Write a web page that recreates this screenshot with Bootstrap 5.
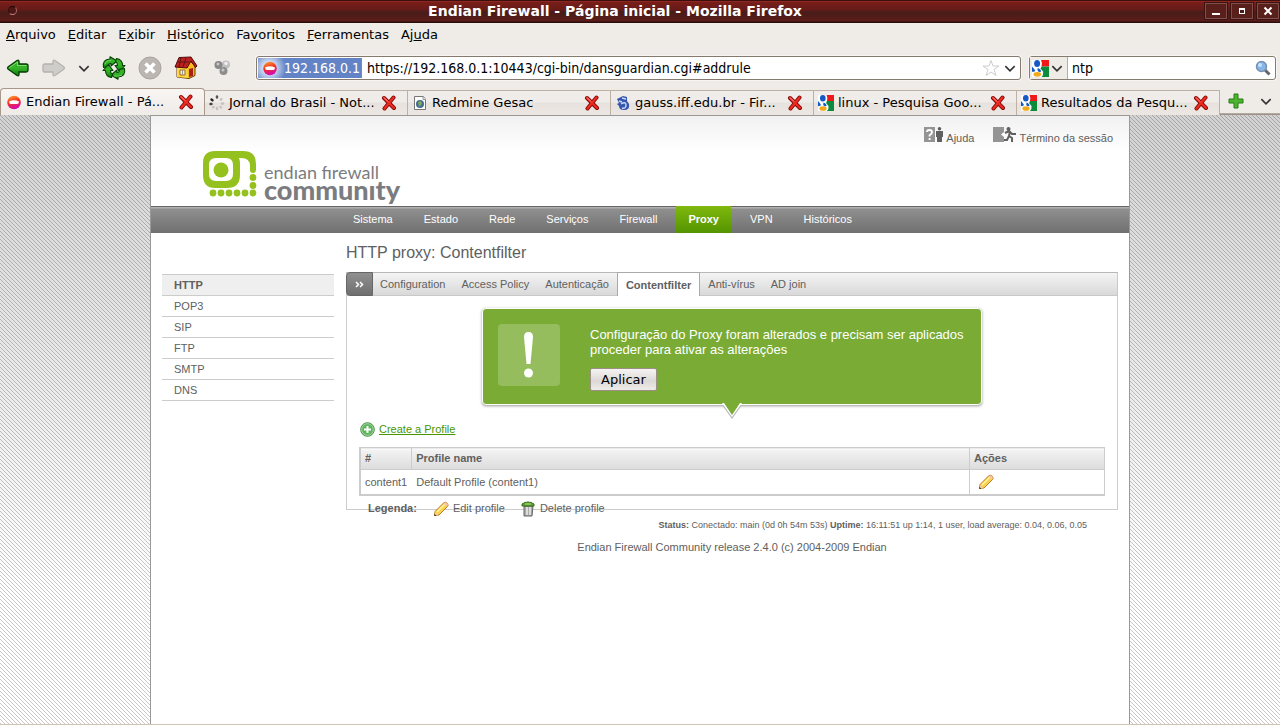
<!DOCTYPE html>
<html lang="pt-BR">
<head>
<meta charset="utf-8">
<meta name="viewport" content="width=device-width, initial-scale=1">
<title>Endian Firewall - Página inicial</title>
<link href="https://cdn.jsdelivr.net/npm/bootstrap@5.3.0/dist/css/bootstrap.min.css" rel="stylesheet">
<style>
body{font-family:"Liberation Sans",Arial,sans-serif;font-size:11px;line-height:15px;color:#606060;background:#fff}
svg{display:block;flex:none}
a{color:inherit;text-decoration:none}
button{padding:0;border:0;background:none;color:inherit}
.chrome{font-family:"DejaVu Sans",sans-serif;font-size:13px;line-height:18px;color:#000;background:#efebe7}
.titlebar{height:23px;padding:0 1px 2px 4px;font-size:14px;color:#fff;font-weight:bold;line-height:20px;background:linear-gradient(#3a0f0d 0 1px,#8d2720 1px 2px,#7a1e1a 2px,#641b18 10px,#471c19 12px,#5c1d19 21px,#2c0d0b 22px)}
.winbtn{width:22px;height:16px;border:1px solid #7d504d;box-shadow:0 0 0 1px #3c1210;background:#591f1b}
.orb{width:9px;height:9px;border-radius:50%;border:1px solid;border-color:#200806 #b06a66 #c08682 #35100e;background:#4c1714}
.menurow{height:25px;padding:0 0 1px 6px;gap:12px}
.toolrow{height:40px}
.toolset{width:256px;padding-left:6px}
.toolset button{width:36px;flex:none}
.toolset .narrow{width:24px}
.field{height:24px;border:1px solid #857a6e;border-radius:3px;background:#fff;box-shadow:0 0 0 1px #f8f6f4;font-family:"DejaVu Sans Condensed","DejaVu Sans",sans-serif;font-size:14px}
.field input{border:0;outline:0;padding:0;background:none;color:#000;min-width:0;line-height:20px}
.field .query{width:183px}
.ident{margin:1px 5px 1px 1px;color:#fff;background:radial-gradient(circle at 11px 10px,#dbe5f8 5px,#6283c5 17px);border-right:1px solid #8b8b8b;padding:0 1px 0 4px;gap:2px}
.engine{width:38px;border-right:1px solid #b6aea6;background:#efebe7;gap:2px;padding-left:2px}
.tabrow{height:27px;border-bottom:1px solid #9c9289;box-shadow:inset 0 -1px #b3a9a0}
.btab{flex:0 1 203px;height:25px;margin-top:2px;border:1px solid #bdb0a5;border-left-width:0;border-bottom:0;background:linear-gradient(#f0ece9 0 11px,#e7e2dd 12px,#ece7e2);padding:0 10px 1px 4px;text-align:left;white-space:nowrap;min-width:0}
.btab.on{flex-basis:205px;margin-top:0;height:27px;border-left-width:1px;border-color:#a8988a;border-radius:4px 4px 0 0;background:linear-gradient(#f8f5f3,#efebe7);padding:0 10px 0 5px}
.stage{border-bottom:1px solid #d3c3b5;background-color:#fff;background-image:url("data:image/svg+xml,%3Csvg xmlns='http://www.w3.org/2000/svg' width='4' height='4' shape-rendering='crispEdges'%3E%3Cpath d='M0 0h1v1h1v1h1v1h1v1h-1v-1h-1v-1h-1v-1h-1z' fill='%23000' fill-opacity='.22'/%3E%3C/svg%3E"),linear-gradient(#d2d2d2,#fff 480px)}
.sheet{max-width:980px;width:100%;background:#fff;border:1px solid #999;border-bottom:0}
.masthead{min-height:90px;background:linear-gradient(#f1f1f1,#fff 36px)}
.brand{margin:35px 0 0 52px;gap:7px;color:#7b7c7f;font-family:Lato,sans-serif}
.brand-a{font-size:18px;line-height:18px}
.brand-b{font-size:27px;font-weight:900;line-height:18px}
.tools{padding:11px 16px 0;gap:19px}
.tools a{gap:3px}
.mainnav{height:27px;border-top:1px solid #666;background:linear-gradient(#b0b0b0 0 1px,#8f8f8f 2px,#707070);padding-left:190px;gap:7px;color:#fff}
.mainnav a{padding:0 12px;line-height:25px}
.mainnav .on{background:linear-gradient(#80b80d,#539400);font-weight:bold;margin-top:-1px;line-height:27px}
.sidecol{width:172px;margin:41px 12px 0 11px}
.sidecol a{display:block;line-height:20px;padding:0 12px;height:21px;border-bottom:1px solid #ccc}
.sidecol a.on{border-top:1px solid #ccc;background:#efefef;font-weight:bold;height:22px}
.maincol{padding-right:11px}
h1{font-size:16px;line-height:20px;margin:10px 0 9px;font-weight:normal}
.subtabs{height:24px;border:1px solid #c9c9c9;border-top-color:#b8b8b8;background:linear-gradient(#f4f4f4,#d9d9d9)}
.subtabs a{padding:0 8px;line-height:23px}
.subtabs a.on{background:#fff;border:1px solid #aaa;border-width:1px 1px 0;font-weight:bold;height:24px;margin-top:-1px;line-height:25px}
.expand{width:27px;margin:-1px 0 -1px -1px;border:1px solid #666;border-radius:4px 0 0 4px;background:linear-gradient(#8f8f8f,#6f6f6f)}
.expand + a{padding-left:7px}
.panel{border:1px solid #ccc;border-top:0;padding:12px 12px 0}
.notice{width:500px;max-width:100%;margin:0 auto;min-height:97px;padding:15px 15px 13px;gap:30px;border:1px solid #fff;border-radius:4px;background:#79ab35;color:#fff;font-size:13px;box-shadow:0 1px 3px #999;position:relative}
.notice .tip{position:absolute;left:50%;top:100%;margin:-1px 0 0 -11px}
.excl{width:62px;height:62px;border-radius:4px;background:#95bc5d}
.notice p{margin:3px 0 11px}
.apply{display:block;font:13px "DejaVu Sans",sans-serif;width:67px;height:23px;color:#000;border:1px solid #9b8f86;border-radius:2px;background:linear-gradient(#f6f4f3,#dcd8d5 12px,#eeebe9)}
.create{margin:17px 1px 10px;gap:4px}
.create span{color:#4a9600;text-decoration:underline}
.grid-t{width:100%;border:1px solid #ccc;border-left-width:2px;border-bottom-width:2px}
.grid-t th{height:22px;background:linear-gradient(#fafafa 0 1px,#f2f2f2 2px,#dcdcdc);border-bottom:1px solid #ccc;padding:0 4px}
.grid-t td{height:25px;padding:1px 4px 0}
.grid-t th:first-child{width:50px}
.grid-t th:last-child{width:135px}
.grid-t th + th,.grid-t td + td{border-left:1px solid #ccc}
.grid-t td + td.plain{border-left-color:#fff}
.legend-row{height:24px;margin:1px 9px -12px;gap:16px}
.status-line{font-size:9px;padding:8px 31px 7px 0}
</style>
</head>
<body class="d-flex flex-column min-vh-100">
<svg class="position-absolute" width="0" height="0" aria-hidden="true">
<defs>
<linearGradient id="gArrow" x2="0" y2="1"><stop stop-color="#2fae22"/><stop offset=".5" stop-color="#37b52a"/><stop offset="1" stop-color="#087a08"/></linearGradient>
<linearGradient id="gBall" x2=".3" y2="1"><stop stop-color="#ffae38"/><stop offset=".5" stop-color="#f2371d"/><stop offset="1" stop-color="#d80bab"/></linearGradient>
<symbol id="ball" viewBox="0 0 16 16"><circle cx="8" cy="8.500" r="6.800" fill="url(#gBall)"/><path d="M3 7.500q5-2.500 10 0Q13 10 11 10H5Q3 10 3 7.500z" fill="#fff"/></symbol>
<symbol id="close" viewBox="0 0 16 16"><path d="M3 3 13 13M12.500 2.500 3.500 13.500" stroke="#7c0806" stroke-width="4" stroke-linecap="round"/><path d="M3 3 13 13M12.500 2.500 3.500 13.500" stroke="#ed2a22" stroke-width="2.400" stroke-linecap="round"/><path d="M3 2.500 7 6.500" stroke="#ff9a93"/></symbol>
<symbol id="goog" viewBox="0 0 16 16"><path d="M0 0h16v16H0z" fill="#fff"/><path d="M8.500 0H16v6H9q1-3-.5-6z" fill="#f01818"/><path d="M9 6h7v10H9q2-2 1.500-5L8 8z" fill="#0c8b3c"/><ellipse cx="4.800" cy="3.300" rx="2.800" ry="3.300" fill="#1459c4"/><path d="M0 6q2 2 3 4-1 1.500-3 1z" fill="#1459c4"/><path d="M5.500 7.500q3 1 3 3.500l-2 .2q-2-1.200-1-3.700z" fill="#1459c4"/><ellipse cx="5" cy="13.500" rx="3.600" ry="2.300" fill="#f0aa1c"/></symbol>
<symbol id="chev" viewBox="0 0 10 6"><path d="M1 1l4 4 4-4" fill="none" stroke="#333" stroke-width="1.400"/></symbol>
<symbol id="pencil" viewBox="0 0 16 16"><path d="M1.500 14.500l.5-4 8.500-8.500q2-1.500 3.700.3t.3 3.200L6 14z" fill="#f8d24c" stroke="#c07a2c"/><path d="M4 11l8-8" stroke="#fff3a0" stroke-width="1.500"/><path d="M10.500 2.500l3 3 1.500-2-2.500-2z" fill="#f6c9ae"/><path d="M2 11 5.500 14l-4 .500z" fill="#f1cfa6"/><path d="M1.300 12.500l2 2.500h-2z" fill="#4d2b09"/></symbol>
</defs></svg>

<header class="chrome">
<div class="titlebar d-flex align-items-center">
<span class="orb ms-1"></span><span class="flex-fill text-center ps-2">Endian Firewall - Página inicial - Mozilla Firefox</span>
<div class="d-flex gap-1">
<button class="winbtn" aria-label="Minimizar"><svg width="20" height="14"><path d="M6 9h8v2H6z" fill="#fff"/></svg></button>
<button class="winbtn" aria-label="Maximizar"><svg width="20" height="14"><path d="M7 4h6v6H7z" fill="#fff"/><path d="M8 6h4v3H8z" fill="#471c19"/></svg></button>
<button class="winbtn" aria-label="Fechar"><svg width="20" height="14"><path d="M6.500 3.500l7 7M13.500 3.500l-7 7" stroke="#fff" stroke-width="2"/></svg></button>
</div></div>
<nav class="menurow d-flex align-items-center" aria-label="Menu">
<a href="#"><u>A</u>rquivo</a><a href="#"><u>E</u>ditar</a><a href="#">E<u>x</u>ibir</a><a href="#"><u>H</u>istórico</a><a href="#">Fa<u>v</u>oritos</a><a href="#"><u>F</u>erramentas</a><a href="#">Aj<u>u</u>da</a>
</nav>
<div class="toolrow d-flex align-items-center">
<div class="toolset d-flex align-items-center flex-shrink-0">
<button aria-label="Voltar"><svg width="24" height="20"><path d="M22 7.500Q22 6 20 6h-7V3.500q0-2-2-1L2 9q-1 1 0 2l9 6.500q2 1 2-1V14h7q2 0 2-1.500z" fill="url(#gArrow)" stroke="#043c04" stroke-width="1.300"/><path d="M3.500 9.500l8-5.500v3.500h9" fill="none" stroke="#82dc70"/></svg></button>
<button aria-label="Avançar"><svg width="24" height="20"><path d="M1 7.500Q1 6 3 6h8V3.500q0-2 2-1L22 9q1 1 0 2l-9 6.500q-2 1-2-1V14H3q-2 0-2-1.500z" fill="#cfcdca" stroke="#b5b2af" stroke-width="1.300"/></svg></button>
<button class="narrow" aria-label="Histórico recente"><svg width="12" height="7"><use href="#chev"/></svg></button>
<button aria-label="Recarregar"><svg width="24" height="24"><g fill="url(#gArrow)" stroke="#053f05" stroke-width="1.100" stroke-linejoin="round"><path d="M1.500 11.500Q0 3.500 8 3V.7l7 4.300-6 5V7.500q-3 0-2 3z"/><path d="M14.500 2.500q6 1 6 7H23L17.500 15.500 13 9.500h2.500q0-3-2-4z"/><path d="M22.500 12.500q1.500 8-6.500 8.500v2.300L9 19l6-5v2.500q3 0 2-3z"/><path d="M9.500 21.500q-6-1-6-7H1l5.500-6 4.500 6H8.500q0 3 2 4z"/></g><path d="M3 8.500q.5-4 6-4.300M12 20q5 .5 8-1" fill="none" stroke="#7ad96b"/></svg></button>
<button aria-label="Parar"><svg width="24" height="24"><circle cx="12" cy="12" r="11" fill="#bcb6b3" stroke="#aaa4a1"/><path d="M7.500 7.500l9 9M16.500 7.500l-9 9" stroke="#fff" stroke-width="3.500"/></svg></button>
<button aria-label="Página inicial"><svg width="24" height="24"><path d="M3 9v12l12 1.500 6-3V10l-5-5z" fill="#f8bd18" stroke="#6d3b06"/><path d="M3 10h10l1 12-11-1z" fill="#fbd648"/><path d="M1 11 5 1.500 17 1l6 9-1.500 1.500L17 5l-4 7z" fill="#b92020" stroke="#560909"/><path d="M4 6h11M7 2 5 11M12 2 9 11" stroke="#681010" fill="none"/><path d="M15 13l4-1v8l-4 1z" fill="#a51f17"/><path d="M6 14h5v5H6z" fill="#eee" stroke="#a36a13"/><path d="M8.500 14v5" stroke="#999"/></svg></button>
<button aria-label="Extensões"><svg width="24" height="24"><circle cx="16" cy="8.500" r="4" fill="#c0c0c0"/><circle cx="8.500" cy="9" r="4" fill="#888"/><circle cx="13.500" cy="15" r="4" fill="#8d8d8d"/><circle cx="8" cy="8" r="1.500" fill="#c7c7c7"/><circle cx="16" cy="7.500" r="1.800" fill="#eee"/><circle cx="13" cy="14" r="1.500" fill="#c5c5c5"/></svg></button>
</div>
<div class="field d-flex flex-fill align-items-stretch me-1">
<button class="ident d-flex align-items-center"><svg width="16" height="16"><use href="#ball"/></svg><span class="ms-1">192.168.0.1</span></button>
<input class="flex-fill" type="text" aria-label="Endereço" value="https://192.168.0.1:10443/cgi-bin/dansguardian.cgi#addrule">
<button aria-label="Adicionar favorito"><svg width="18" height="18"><path d="M9 1.500l2 5.500h6l-5 3.500 2 6-5-3.500-5 3.500 2-6L1 7h6z" fill="#fff" stroke="#ccc"/></svg></button>
<button class="mx-1" aria-label="Mostrar endereços"><svg width="12" height="7"><use href="#chev"/></svg></button>
</div>
<div class="field d-flex align-items-stretch flex-shrink-0 ms-1 me-1">
<button class="engine d-flex align-items-center" aria-label="Mecanismo de busca"><svg width="17" height="17"><use href="#goog"/></svg><svg width="12" height="7"><use href="#chev"/></svg></button>
<input class="query ms-1" type="text" aria-label="Pesquisar" value="ntp">
<button class="me-1" aria-label="Buscar"><svg width="16" height="18"><path d="M10 11l4.500 4.500" stroke="#62656b" stroke-width="3"/><circle cx="6.500" cy="7.500" r="5" fill="#85b5ea" stroke="#7991ad" stroke-width="1.500"/><circle cx="5" cy="6" r="2" fill="#c8e1fa"/></svg></button>
</div>
</div>
<div class="tabrow d-flex">
<button class="btab on d-flex align-items-center"><svg width="16" height="16"><use href="#ball"/></svg><span class="flex-fill ms-1">Endian Firewall - Pá...</span><svg width="16" height="16"><use href="#close"/></svg></button>
<button class="btab d-flex align-items-center"><svg width="16" height="16"><g fill="none" stroke-width="2.400" stroke-linecap="round"><path d="M2.500 4.500l1 .7" stroke="#222"/><path d="M8 1.500v1" stroke="#555"/><path d="M1.500 9h1" stroke="#444"/><path d="M12.500 4l-.7.700M14 8.500h-1M12 12.500l-.6-.6M8 14v-1M4 12.500l.6-.6" stroke="#c4c2c0"/></g></svg><span class="flex-fill ms-1">Jornal do Brasil - Not...</span><svg width="16" height="16"><use href="#close"/></svg></button>
<button class="btab d-flex align-items-center"><svg width="16" height="16"><path d="M2.500 1.500h9l2 3v10h-11z" fill="#fff" stroke="#777"/><path d="M11 1.500v3h3" fill="#ddd" stroke="#999"/><circle cx="8" cy="9" r="4" fill="#406d91"/><path d="M6 7l3-1 1 3-3 3z" fill="#8aa65a"/></svg><span class="flex-fill ms-1">Redmine Gesac</span><svg width="16" height="16"><use href="#close"/></svg></button>
<button class="btab d-flex align-items-center"><svg width="16" height="16"><path d="M2 4l4-2 2-1 4 1v4l2 3q1 6-5 6-5 0-5-4L2 9l2-1z" fill="#3557ab"/><path d="M6 9q5-3 5 1t-4 3M7 3l4 1M4 6l3 1" fill="none" stroke="#cbd9ff" stroke-width="1.400"/></svg><span class="flex-fill ms-1">gauss.iff.edu.br - Fir...</span><svg width="16" height="16"><use href="#close"/></svg></button>
<button class="btab d-flex align-items-center"><svg width="16" height="16"><use href="#goog"/></svg><span class="flex-fill ms-1">linux - Pesquisa Goo...</span><svg width="16" height="16"><use href="#close"/></svg></button>
<button class="btab d-flex align-items-center"><svg width="16" height="16"><use href="#goog"/></svg><span class="flex-fill ms-1">Resultados da Pesqu...</span><svg width="16" height="16"><use href="#close"/></svg></button>
<button class="ms-2" aria-label="Nova aba"><svg width="16" height="16"><path d="M6 1h4v5h5v4h-5v5H6v-5H1V6h5z" fill="#4cb52d" stroke="#277b19" stroke-linejoin="round"/></svg></button>
<button class="ms-auto me-2" aria-label="Listar abas"><svg width="12" height="7"><use href="#chev"/></svg></button>
</div>
</header>

<div class="stage flex-fill d-flex justify-content-center">
<div class="sheet">
<div class="masthead d-flex justify-content-between align-items-start">
<a href="#" class="brand d-flex">
<svg width="54" height="46" viewBox="0 0 54 46"><path fill="#95c11f" fill-rule="evenodd" d="M12 0h28q13 0 13 13v6q0 3-3 3t-3-3v-4q0-8-9-8h-2q1 2 1 5v12q0 13-13 13H12Q0 37 0 24V12Q0 0 12 0zM13 7q-7 0-7 7v9q0 7 7 7h10q7 0 7-7v-9q0-7-7-7z"/><circle cx="18" cy="19" r="7.500" fill="#95c11f"/><g fill="#95c11f"><circle cx="50" cy="26.500" r="3.400"/><circle cx="50" cy="34.500" r="3.400"/><circle cx="50" cy="42" r="3.400"/><circle cx="42" cy="42" r="3.400"/><circle cx="34" cy="42" r="3.400"/><circle cx="26" cy="42" r="3.400"/><circle cx="18" cy="42" r="3.400"/><circle cx="10" cy="42" r="3.400"/></g></svg>
<span class="d-flex flex-column pt-2 mt-1"><span class="brand-a">endıan fırewall</span><span class="brand-b">communıty</span></span>
</a>
<div class="tools d-flex">
<a href="#" class="d-flex"><svg width="19" height="16"><path d="M0 0h11v15H0z" fill="#949494"/><path d="M3 5q0-2 2.500-2T8 5.200q0 1.500-2.400 3V9.500M5.600 11v2" fill="none" stroke="#fff" stroke-width="1.900"/><circle cx="15.500" cy="1.800" r="1.800" fill="#606060"/><path d="M12 4h7v6h-1v5h-5v-5h-1z" fill="#606060"/></svg><span class="pt-1">Ajuda</span></a>
<a href="#" class="d-flex"><svg width="23" height="16"><path d="M0 0h11v15H0z" fill="#949494"/><path d="M11 5v5L8 7.500z" fill="#fff"/><circle cx="15.500" cy="2" r="2" fill="#606060"/><path d="M12 6l4-2 3 3h4M17 4l-1 5 3 2v4M16 9l-2 4h-3" fill="none" stroke="#606060" stroke-width="2"/></svg><span class="pt-1">Término da sessão</span></a>
</div>
</div>
<nav class="mainnav d-flex" aria-label="Principal"><a href="#">Sistema</a><a href="#">Estado</a><a href="#">Rede</a><a href="#">Serviços</a><a href="#">Firewall</a><a href="#" class="on">Proxy</a><a href="#">VPN</a><a href="#">Históricos</a></nav>
<div class="d-flex">
<nav class="sidecol flex-shrink-0" aria-label="Proxy"><a href="#" class="on">HTTP</a><a href="#">POP3</a><a href="#">SIP</a><a href="#">FTP</a><a href="#">SMTP</a><a href="#">DNS</a></nav>
<main class="maincol flex-fill">
<h1>HTTP proxy: Contentfilter</h1>
<nav class="subtabs d-flex" aria-label="HTTP proxy"><button class="expand d-flex align-items-center justify-content-center" aria-label="Expandir"><svg width="9" height="7"><path d="M1 1l2.500 2.500L1 6M5 1l2.500 2.500L5 6" fill="none" stroke="#fff" stroke-width="1.500"/></svg></button><a href="#">Configuration</a><a href="#">Access Policy</a><a href="#">Autenticação</a><a href="#" class="on">Contentfilter</a><a href="#">Anti-vírus</a><a href="#">AD join</a></nav>
<section class="panel">
<div class="notice d-flex">
<div class="excl flex-shrink-0"><svg width="62" height="62"><path d="M26 13q0-5 4.500-5t4.500 5l-2.500 27h-4z" fill="#fff"/><circle cx="30.500" cy="49" r="4.500" fill="#fff"/></svg></div>
<div><p>Configuração do Proxy foram alterados e precisam ser aplicados<br>proceder para ativar as alterações</p><button class="apply">Aplicar</button></div>
<svg class="tip" width="22" height="17"><path d="M1 2l10 14L21 2" fill="#bbb"/><path d="M1 0h20L11 14z" fill="#fff"/><path d="M3 0h16l-8 12z" fill="#79ab35"/></svg>
</div>
<a href="#addrule" class="create d-inline-flex align-items-center"><svg width="15" height="15"><circle cx="7.500" cy="7.500" r="6.800" fill="#5cb55a" stroke="#4b8f4b"/><circle cx="7.500" cy="7.500" r="5.800" fill="none" stroke="#a7d7a5"/><path d="M7.500 4v7M4 7.500h7" stroke="#fff" stroke-width="2"/></svg><span>Create a Profile</span></a>
<table class="grid-t">
<thead><tr><th>#</th><th>Profile name</th><th>Ações</th></tr></thead>
<tbody><tr><td>content1</td><td class="plain">Default Profile (content1)</td><td><button class="d-block ms-1" aria-label="Edit profile"><svg width="16" height="16"><use href="#pencil"/></svg></button></td></tr></tbody>
</table>
<div class="legend-row d-flex align-items-center"><b>Legenda:</b>
<span class="d-flex align-items-center gap-1"><svg width="16" height="16"><use href="#pencil"/></svg>Edit profile</span>
<span class="d-flex align-items-center gap-1"><svg width="15" height="16"><path d="M3 5h9l-1 10H3z" fill="#aaa" stroke="#666"/><path d="M6 6v8M9 6v8" stroke="#eee" stroke-width="1.500"/><path d="M1 3q6-4 12 0v2H1z" fill="#5ca22f" stroke="#346f18"/><path d="M4 3h6" stroke="#b4e28d"/></svg>Delete profile</span></div>
</section>
<div class="status-line text-end"><b>Status:</b> Conectado: main (0d 0h 54m 53s) <b>Uptime:</b> 16:11:51 up 1:14, 1 user, load average: 0.04, 0.06, 0.05</div>
<footer class="text-center">Endian Firewall Community release 2.4.0 (c) 2004-2009 Endian</footer>
</main>
</div>
</div>
</div>
<script src="https://cdn.jsdelivr.net/npm/bootstrap@5.3.0/dist/js/bootstrap.bundle.min.js"></script>
</body>
</html>
